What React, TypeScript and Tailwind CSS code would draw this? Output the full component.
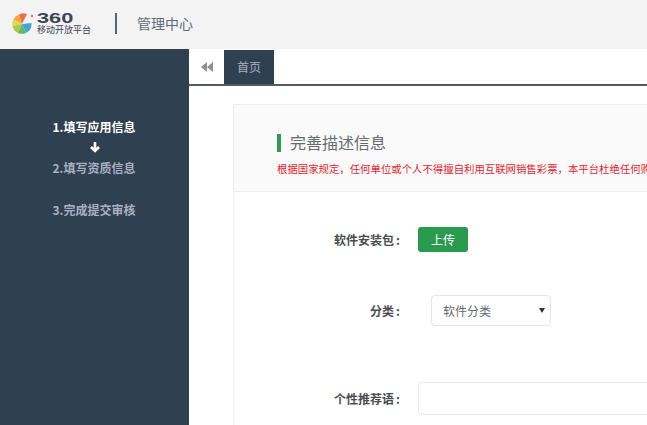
import React from 'react';

const FONT = '"Noto Sans CJK SC", "Open Sans", sans-serif';

const Logo: React.FC = () => (
  <div className="flex items-center">
    <svg width="22" height="22" viewBox="0 0 22 22" className="shrink-0">
      <path d="M10 12 L1.5 7.5 A10 10 0 0 1 7 2.5 Z" fill="#f0a63a" />
      <path d="M10 12 L7 2.5 A10 10 0 0 1 15 2 Z" fill="#ee6f4a" />
      <path d="M10 12 L1.5 7.5 A10 10 0 0 0 0.5 14 Z" fill="#eed34c" />
      <path d="M10 12 L0.5 14 A10 10 0 0 0 6 21 Z" fill="#a5cc4e" />
      <path d="M10 12 L6 21 A10 10 0 0 0 14 21 Z" fill="#66b95a" />
      <path d="M10 12 L14 21 A10 10 0 0 0 19.5 11 Z" fill="#3fa6d8" />
      <circle cx="20" cy="4" r="1.2" fill="#e8734c" />
    </svg>
    <div className="ml-[3px] flex flex-col text-[#3b4652]">
      <span className="text-[15px] leading-[11px] h-[11px] font-bold scale-x-[1.45] origin-left font-['Liberation_Sans',sans-serif]">360</span>
      <span className="text-[9px] leading-[9px] mt-[2px] whitespace-nowrap w-[54px]">移动开放平台</span>
    </div>
  </div>
);

const Step: React.FC<{ text: string; active?: boolean; className?: string }> = ({ text, active, className }) => (
  <div className={`text-[12px] leading-[17px] font-bold text-center -ml-[1px] ${active ? 'text-white' : 'text-[#a7b1c2]'} ${className ?? ''}`}>
    {text}
  </div>
);

const FieldLabel: React.FC<{ text: string }> = ({ text }) => (
  <label className="w-[67px] flex justify-end items-center text-[12px] font-bold text-[#4a4d50] whitespace-nowrap">
    {text}
    <span className="ml-[2px] mr-[1px]">:</span>
  </label>
);

const App: React.FC = () => {
  return (
    <div className="w-[647px] h-[425px] overflow-hidden bg-white flex flex-col" style={{ fontFamily: FONT }}>
      <header className="h-[49px] shrink-0 bg-[#f3f3f3] flex items-center pl-[12px] pb-[3px]">
        <Logo />
        <div className="ml-[24px] w-[2px] h-[21px] bg-[#5b6470]" />
        <div className="ml-[20px] text-[14px] text-[#5f6b76]">管理中心</div>
      </header>

      <div className="flex-1 flex min-h-0">
        <aside className="w-[189px] shrink-0 bg-[#2f4050] pt-[69px]">
          <Step text="1.填写应用信息" active />
          <svg width="12" height="12" viewBox="0 0 12 12" className="mx-auto mt-[6px] mb-[6px]">
            <path d="M6 1 V9 M2 6 L6 10 L10 6" stroke="#ffffff" strokeWidth="2.6" fill="none" />
          </svg>
          <Step text="2.填写资质信息" />
          <Step text="3.完成提交审核" className="mt-[25px]" />
        </aside>

        <main className="flex-1 min-w-0 overflow-hidden">
          <div className="h-[37px] flex items-stretch border-b-2 border-[#555b60] pt-[1px]">
            <div className="w-[35px] flex items-center justify-center">
              <svg width="12" height="10" viewBox="0 0 12 10">
                <path d="M6 0 V10 L0 5 Z M12 0 V10 L6 5 Z" fill="#8f8f8f" />
              </svg>
            </div>
            <div className="w-[50px] bg-[#2f4050] text-[#a7b1c2] text-[12px] flex items-center justify-center">首页</div>
          </div>

          <div className="ml-[44px] mt-[18px] w-[600px] h-[400px] border-l border-t border-[#eeeeee]">
            <div className="h-[87px] bg-[#fafafa] border-b border-[#eeeeee] pl-[43px] pt-[27px]">
              <div className="flex items-center h-[20px]">
                <div className="w-[4px] h-[18px] bg-[#2f9a50] mt-[2px]" />
                <div className="ml-[9px] text-[16px] leading-[20px] text-[#676a6c] whitespace-nowrap">完善描述信息</div>
              </div>
              <div className="mt-[10px] text-[10.4px] leading-[14px] text-[#e5242b] whitespace-nowrap">
                根据国家规定，任何单位或个人不得擅自利用互联网销售彩票，本平台杜绝任何购彩类应用
              </div>
            </div>

            <div className="pl-[100px]">
              <div className="flex items-center mt-[35px]">
                <FieldLabel text="软件安装包" />
                <button className="ml-[17px] w-[50px] h-[25px] bg-[#2a9a4e] rounded-[3px] text-white text-[12px]">上传</button>
              </div>
              <div className="flex items-center mt-[43px]">
                <FieldLabel text="分类" />
                <div className="ml-[30px] w-[120px] h-[31px] border border-[#e5e6e7] rounded-[4px] flex items-center justify-between pl-[11px] pr-[5px]">
                  <span className="text-[12px] text-[#676a6c]">软件分类</span>
                  <svg width="6" height="5" viewBox="0 0 6 5"><path d="M0 0 H6 L3 5 Z" fill="#333333" /></svg>
                </div>
              </div>
              <div className="flex items-center mt-[56px]">
                <FieldLabel text="个性推荐语" />
                <div className="ml-[17px] w-[400px] h-[33px] border border-[#e5e6e7] rounded-[4px] bg-white" />
              </div>
            </div>
          </div>
        </main>
      </div>
    </div>
  );
};

export default App;
